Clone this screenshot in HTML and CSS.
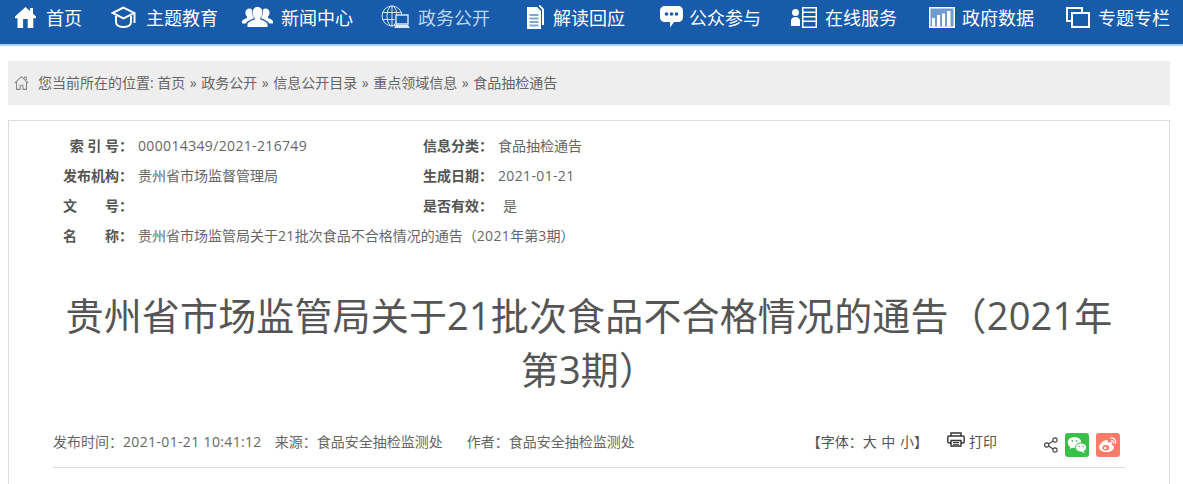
FILE: index.html
```html
<!DOCTYPE html>
<html lang="zh-CN">

<head>
    <meta charset="utf-8">
    <title>贵州省市场监管局关于21批次食品不合格情况的通告（2021年第3期）</title>
    <link rel="stylesheet" href="styles.css">
</head>

<body>
    <nav class="navbar">
        <a class="nav-item">
            <svg class="nav-icon home-icon" viewBox="0 0 21 21" fill="#fff">
                <path d="M10.5 0 0 9.6v1.6h2.5V21h5.6v-9h4.6v9h5.6V11.2H21V9.6l-3-2.8V1h-3v3z" />
                <path d="M9.5 13h2v8h-2z" fill="#195bab" />
            </svg>
            <span>首页</span>
        </a>
        <a class="nav-item">
            <svg class="nav-icon edu-icon" viewBox="0 0 25 22" fill="none" stroke="#fff" stroke-width="2">
                <path d="M12.5 1.5 1.5 7l11 5.5L23.5 7z" />
                <path d="M5 10v6c0 3 3 5 7.5 5s7.5-2 7.5-5v-6" />
                <path d="M23.5 8v9" />
            </svg>
            <span>主题教育</span>
        </a>
        <a class="nav-item">
            <svg class="nav-icon news-icon" viewBox="0 0 31 20" fill="#fff">
                <path d="M15.5 0c3.2 0 5 2.4 5 5.4 0 2.300-.9 4.200-2.200 5.400v1.800c3.800 1.100 7.200 3 7.200 4.800V20H5.500v-2.600c0-1.800 3.400-3.700 7.200-4.800v-1.800c-1.300-1.200-2.200-3.100-2.200-5.400 0-3 1.800-5.400 5-5.400z" />
                <path d="M7.500 1.500c1.100 0 1.900.4 2.500 1-.5 2.800.1 5.700 1.700 7.600v1.300C7.900 12.600 4.500 14.300 3.800 16.500H0v-1.800c0-1.500 2.500-2.900 5-3.700V9.600C4 8.600 3.400 7.200 3.400 5.500c0-2.300 1.600-4 4.100-4z" />
                <path d="M23.500 1.500c-1.100 0-1.900.4-2.500 1 .5 2.800-.1 5.700-1.700 7.600v1.300c3.800 1.200 7.200 2.900 7.900 5.100H31v-1.800c0-1.500-2.500-2.900-5-3.700V9.600c1-1 1.600-2.400 1.600-4.100 0-2.300-1.600-4-4.100-4z" />
            </svg>
            <span>新闻中心</span>
        </a>
        <a class="nav-item active">
            <svg class="nav-icon open-icon" viewBox="0 0 30 24" fill="none" stroke="#cfe2f6" stroke-width="1">
                <circle cx="11" cy="11" r="10" />
                <ellipse cx="11" cy="11" rx="5" ry="10" />
                <path d="M11 1v20M1.500 7.500h19M1.500 14.500h12" />
                <path d="M15 10h12v9H15z" fill="#195bab" stroke="#dbe9f7" stroke-width="1.400" />
                <path d="M13 23l2-3h12l2 3z" fill="#dbe9f7" stroke="none" />
            </svg>
            <span>政务公开</span>
        </a>
        <a class="nav-item">
            <svg class="nav-icon doc-icon" viewBox="0 0 17 24" fill="#fff">
                <path d="M0 2h10l4 4v18H0z" />
                <path d="M12 0h1l4 4v16h-2V4.500L12 1.500z" />
                <path d="M2.500 9h9v2h-9zM2.500 12.500h9v2h-9zM2.500 16h9v2h-9zM2.500 19.500h9v2h-9z" fill="#7ea6d3" />
            </svg>
            <span>解读回应</span>
        </a>
        <a class="nav-item">
            <svg class="nav-icon talk-icon" viewBox="0 0 23 22" fill="#fff">
                <path d="M5 0h13c3 0 5 2 5 5v6c0 3-2 5-5 5h-4l-4 5.500V16H5c-3 0-5-2-5-5V5c0-3 2-5 5-5z" />
                <circle cx="6.500" cy="8" r="1.800" fill="#195bab" />
                <circle cx="11.500" cy="8" r="1.800" fill="#195bab" />
                <circle cx="16.500" cy="8" r="1.800" fill="#195bab" />
            </svg>
            <span>公众参与</span>
        </a>
        <a class="nav-item">
            <svg class="nav-icon serve-icon" viewBox="0 0 26 21" fill="#fff">
                <circle cx="4.500" cy="5.500" r="3.500" />
                <path d="M0 19v-5c0-2.500 2-4 4.500-4S9 11.500 9 14v5z" />
                <path d="M11 0h15v21H11zM12.500 1.500v3h12v-3zM12.500 6v3h12V6zM12.500 10.500v3h12v-3zM12.500 15v4.500h12V15z" fill-rule="evenodd" />
            </svg>
            <span>在线服务</span>
        </a>
        <a class="nav-item">
            <svg class="nav-icon data-icon" viewBox="0 0 26 21">
                <path d="M0 0h26v21H0z" fill="#fff" />
                <path d="M1.500 1.500h23v18h-23z" fill="#6f9bd0" />
                <path d="M3 11h3v8.500H3zM8 8h3v11.500H8zM13 6.500h3v13h-3zM18 4h3.500v15.500H18z" fill="#fff" />
            </svg>
            <span>政府数据</span>
        </a>
        <a class="nav-item">
            <svg class="nav-icon topic-icon" viewBox="0 0 24 22" fill="none" stroke="#fff" stroke-width="2">
                <path d="M6 15H1V2h15v5" />
                <path d="M6 7h17v14H6z" />
            </svg>
            <span>专题专栏</span>
        </a>
    </nav>

    <div class="crumbs">
        <svg class="crumbs-icon" viewBox="0 0 16 16" fill="none" stroke="#888" stroke-width="1.100">
            <path d="M.7 8.200 8 1.200l7.300 7" />
            <path d="M2.700 7v7.800h3.800v-4.500h3v4.500h3.800V7" />
            <path d="M11.300 3V1.700h1.700v3" />
        </svg>
        <span class="crumbs-text">您当前所在的位置: 首页<span class="sep">»</span>政务公开<span class="sep">»</span>信息公开目录<span class="sep">»</span>重点领域信息<span class="sep">»</span>食品抽检通告</span>
    </div>

    <div class="main-box">
        <div class="info-table">
            <div class="info-row">
                <b class="info-label">索&nbsp;引&nbsp;号：</b>
                <span class="info-value wide num">000014349/2021-216749</span>
                <b class="info-label">信息分类：</b>
                <span class="info-value">食品抽检通告</span>
            </div>
            <div class="info-row">
                <b class="info-label">发布机构：</b>
                <span class="info-value wide">贵州省市场监督管理局</span>
                <b class="info-label">生成日期：</b>
                <span class="info-value num">2021-01-21</span>
            </div>
            <div class="info-row">
                <b class="info-label">文&emsp;&emsp;号：</b>
                <span class="info-value wide"></span>
                <b class="info-label">是否有效：</b>
                <span class="info-value valid">是</span>
            </div>
            <div class="info-row">
                <b class="info-label">名&emsp;&emsp;称：</b>
                <span class="info-value">贵州省市场监管局关于<span class="num">21</span>批次食品不合格情况的通告（<span class="num">2021</span>年第<span class="num">3</span>期）</span>
            </div>
        </div>

        <h1 class="doc-title">贵州省市场监管局关于21批次食品不合格情况的通告（2021年第3期）</h1>

        <div class="meta-bar">
            <span class="meta-time">发布时间：<span class="num">2021-01-21 10:41:12</span></span>
            <span class="meta-source">来源：食品安全抽检监测处</span>
            <span class="meta-author">作者：食品安全抽检监测处</span>
            <span class="meta-font">【字体：大 中 小】</span>
            <span class="meta-print">
                <svg class="print-icon" viewBox="0 0 18 15" fill="none" stroke="#333" stroke-width="1.400">
                    <path d="M4 4V1h10v3" />
                    <rect x=".8" y="4" width="16.400" height="7" rx="1.500" />
                    <path d="M4 8.500h10v5.500H4z" fill="#fff" />
                    <path d="M6 10.500h6M6 12.300h6" stroke-width="1" />
                </svg>
                打印
            </span>
            <svg class="share-icon" viewBox="0 0 14 16" fill="none" stroke="#444" stroke-width="1.100">
                <circle cx="2.700" cy="8" r="2.100" />
                <circle cx="11" cy="3" r="2.100" />
                <circle cx="11" cy="13" r="2.100" />
                <path d="M4.500 7 9.200 4M4.500 9l4.700 3" />
            </svg>
            <span class="share-btn wechat">
                <svg viewBox="0 0 24 24" fill="#fff">
                    <ellipse cx="9.500" cy="9.500" rx="6.800" ry="5.600" />
                    <path d="M5.500 13l-.8 3 3-1.600z" />
                    <ellipse cx="16" cy="14.500" rx="5.600" ry="4.600" stroke="#39c049" />
                    <path d="M18.500 18l1.300 2.200-3.400-1.500z" />
                    <circle cx="7.300" cy="7.800" r=".9" fill="#39c049" />
                    <circle cx="11.600" cy="7.800" r=".9" fill="#39c049" />
                    <circle cx="14" cy="13.300" r=".8" fill="#39c049" />
                    <circle cx="18" cy="13.300" r=".8" fill="#39c049" />
                </svg>
            </span>
            <span class="share-btn weibo">
                <svg viewBox="0 0 24 24">
                    <path d="M10.500 19c-4 0-7.500-1.900-7.500-4.800 0-2.700 3.700-6.500 6.900-7.300 1.800-.4 2.300 1 1.800 2.800 2-.9 4-.9 4.400.4.200.7-.1 1.200-.5 1.700 1.500.5 2.400 1.300 2.400 2.600 0 2.200-3.300 4.600-7.500 4.600z" fill="#fff" />
                    <ellipse cx="9.800" cy="14.700" rx="3.400" ry="2.700" fill="#fb7b68" />
                    <circle cx="9.300" cy="14.900" r="1.200" fill="#fff" />
                    <path d="M15 5.200c3-.6 5.500 2 4.400 5M15.500 7.800c1.400-.3 2.400 1 2 2.200" fill="none" stroke="#fff" stroke-width="1.300" stroke-linecap="round" />
                </svg>
            </span>
        </div>
    </div>
</body>

</html>
```

FILE: styles.css
```css
html,
body {
    height: 484px;
    overflow: hidden;
}

body {
    margin: 0;
    padding: 0;
    background-color: #fff;
    color: #666;
    font-family: "Open Sans", "Noto Sans CJK SC", sans-serif;
    font-size: 14px;
}

.num {
    letter-spacing: .025em;
}

.navbar {
    display: grid;
    grid-template-columns: 96px 131px 139px 146px 133px 131px 138px 137px auto;
    align-items: center;
    height: 34px;
    padding-left: 15px;
    padding-bottom: 10px;
    background-color: #195bab;
    border-bottom: 2px solid #a5d0ef;
}

.nav-item {
    display: flex;
    align-items: center;
    color: #fff;
    font-size: 18px;
    white-space: nowrap;
}

.nav-item.active {
    color: #b9d6f2;
}

.nav-icon {
    flex: none;
    display: block;
}

.home-icon {
    width: 21px;
    height: 21px;
    margin-right: 10px;
}

.edu-icon {
    width: 25px;
    height: 22px;
    margin-right: 10px;
}

.news-icon {
    width: 31px;
    height: 20px;
    margin-right: 8px;
}

.open-icon {
    width: 30px;
    height: 24px;
    margin-right: 7px;
}

.doc-icon {
    width: 17px;
    height: 24px;
    margin-right: 9px;
}

.talk-icon {
    width: 23px;
    height: 22px;
    margin-right: 6px;
}

.serve-icon {
    width: 26px;
    height: 21px;
    margin-right: 8px;
}

.data-icon {
    width: 26px;
    height: 21px;
    margin-right: 7px;
}

.topic-icon {
    width: 24px;
    height: 22px;
    margin-right: 8px;
}

.crumbs {
    display: flex;
    align-items: center;
    gap: 9px;
    height: 44px;
    margin: 15px 13px 0 8px;
    padding-left: 6px;
    background-color: #eee;
    font-size: 14px;
    color: #666;
}

.crumbs-icon {
    width: 15px;
    height: 16px;
}

.crumbs-text {
    margin-bottom: 3px;
}

.sep {
    margin: 0 4.500px;
}

.main-box {
    height: 400px;
    margin: 15px 13px 0 8px;
    padding: 9px 44px 0;
    border: 1px solid #ddd;
}

.info-row {
    display: flex;
    align-items: center;
    height: 30px;
}

.info-label {
    width: 80px;
    flex: none;
    text-align: right;
    color: #555;
}

.info-value {
    margin-left: 5px;
    white-space: nowrap;
}

.info-value.wide {
    width: 275px;
}

.info-value.valid {
    margin-left: 10px;
}

.doc-title {
    margin: 38px 0 0;
    font-size: 38px;
    font-weight: normal;
    letter-spacing: .15px;
    line-height: 54px;
    text-align: center;
    color: #555;
}

.meta-bar {
    display: flex;
    align-items: center;
    height: 32px;
    margin-top: 29px;
    padding-bottom: 10px;
    border-bottom: 1px solid #ddd;
}

.meta-source {
    margin-left: 13px;
}

.meta-author {
    margin-left: 24px;
}

.meta-font {
    margin-left: 172px;
    word-spacing: 1px;
    color: #555;
}

.meta-print {
    display: flex;
    align-items: center;
    gap: 4px;
    margin-left: 19px;
    color: #555;
}

.print-icon {
    width: 18px;
    height: 15px;
    margin-bottom: 4px;
}

.share-icon {
    width: 14px;
    height: 16px;
    margin-top: 8px;
    margin-left: 47px;
}

.share-btn {
    display: block;
    width: 24px;
    height: 24px;
    margin-top: 8px;
    margin-left: 7px;
    border-radius: 3px;
}

.share-btn svg {
    display: block;
}

.wechat {
    background-color: #39c049;
}

.weibo {
    background-color: #fb7b68;
}
```
